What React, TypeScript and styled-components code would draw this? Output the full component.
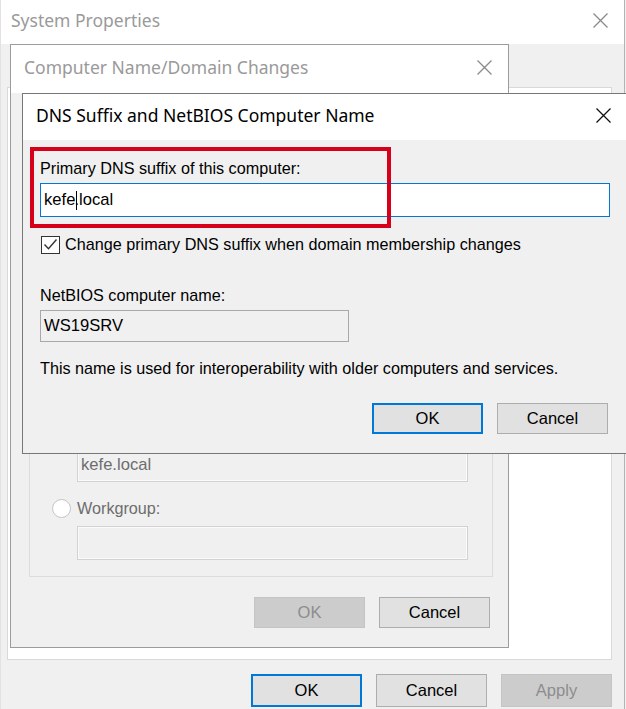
import React from 'react';
import styled, { createGlobalStyle } from 'styled-components';

const GlobalStyle = createGlobalStyle`
  html, body {
    margin: 0;
    padding: 0;
  }
  body {
    background: #f0f0f0;
    overflow: hidden;
    font-family: 'Liberation Sans', Arial, sans-serif;
    font-size: 16.2px;
    color: #000;
  }
`;

// the "desktop" the three windows sit on
const Desktop = styled.div`
  position: relative;
  width: 626px;
  height: 709px;
  overflow: hidden;
  background: #f0f0f0;
`;

const Window = styled.div<{ $x: number; $y: number; $w: number; $h: number; $border: string }>`
  position: absolute;
  left: ${(p) => p.$x}px;
  top: ${(p) => p.$y}px;
  width: ${(p) => p.$w}px;
  height: ${(p) => p.$h}px;
  box-sizing: border-box;
  border: 1px solid ${(p) => p.$border};
  background: #f0f0f0;
  display: flex;
  flex-direction: column;
  overflow: hidden;
`;

const MainWindow = styled(Window)`
  border-top: none;
  border-bottom: none;
  border-left-color: #e2e2e2;
`;

const TitleBar = styled.div<{ $h: number; $pl: number }>`
  flex: none;
  height: ${(p) => p.$h}px;
  box-sizing: border-box;
  background: #fff;
  display: flex;
  align-items: center;
  justify-content: space-between;
  padding: 0 16px 4px ${(p) => p.$pl}px;
`;

const Title = styled.span<{ $active?: boolean }>`
  font-family: 'Noto Sans', 'Open Sans', sans-serif;
  font-size: 17.5px;
  color: ${(p) => (p.$active ? '#000' : '#9a9a9a')};
  white-space: nowrap;
`;

const CloseIcon = ({ color }: { color: string }) => (
  <svg width="15" height="15" viewBox="0 0 15 15">
    <path d="M0.5 0.5 L14.5 14.5 M14.5 0.5 L0.5 14.5" stroke={color} strokeWidth="1.3" fill="none" />
  </svg>
);

/* ---------- System Properties ---------- */

const MainBody = styled.div`
  flex: 1;
  display: flex;
  flex-direction: column;
  padding: 43px 12px 0 6px;
`;

const TabPanel = styled.div`
  height: 573px;
  box-sizing: border-box;
  background: #fff;
  border: 1px solid #d9d9d9;
`;

const ButtonRow = styled.div<{ $mt: number; $gap?: number; $pr?: number }>`
  display: flex;
  justify-content: flex-end;
  gap: ${(p) => p.$gap ?? 14}px;
  margin-top: ${(p) => p.$mt}px;
  padding-right: ${(p) => p.$pr ?? 0}px;
`;

const Button = styled.button<{ $default?: boolean; $h: number; $w?: number }>`
  width: ${(p) => p.$w ?? 111}px;
  height: ${(p) => p.$h}px;
  box-sizing: border-box;
  margin: 0;
  padding: 0;
  background: #e1e1e1;
  border: ${(p) => (p.$default ? '2px solid #0078d7' : '1px solid #adadad')};
  font-family: 'Liberation Sans', Arial, sans-serif;
  font-size: 16.5px;
  color: #000;

  &:disabled {
    background: #cccccc;
    border: 1px solid #c4c4c4;
    color: #8d8d8d;
  }
`;

/* ---------- Computer Name/Domain Changes ---------- */

const ChangesBody = styled.div`
  flex: 1;
  display: flex;
  flex-direction: column;
  justify-content: flex-end;
  padding: 0 16px 19px 18px;
  overflow: hidden;
  color: #6d6d6d;
`;

const Group = styled.fieldset`
  margin: 0;
  padding: 0 24px 16px 22px;
  border: 1px solid #dcdcdc;
  display: flex;
  flex-direction: column;
`;

const Legend = styled.legend`
  padding: 0 3px;
`;

const RadioRow = styled.div<{ $mt: number }>`
  display: flex;
  align-items: center;
  gap: 6px;
  height: 19px;
  margin-top: ${(p) => p.$mt}px;
`;

const Radio = styled.span<{ $checked?: boolean }>`
  flex: none;
  width: 19px;
  height: 19px;
  box-sizing: border-box;
  border-radius: 50%;
  border: 1px solid #c4c4c4;
  background: #fff;
  display: flex;
  align-items: center;
  justify-content: center;

  &::after {
    content: '';
    display: ${(p) => (p.$checked ? 'block' : 'none')};
    width: 9px;
    height: 9px;
    border-radius: 50%;
    background: #9a9a9a;
  }
`;

const Field = styled.div<{ $w?: number; $h: number; $mt: number; $ml?: number; $variant: 'focus' | 'readonly' | 'disabled' }>`
  width: ${(p) => (p.$w ? `${p.$w}px` : 'auto')};
  height: ${(p) => p.$h}px;
  margin-top: ${(p) => p.$mt}px;
  margin-left: ${(p) => p.$ml ?? 0}px;
  box-sizing: border-box;
  display: flex;
  align-items: center;
  padding-left: 3px;
  font-size: 16.6px;
  white-space: nowrap;
  background: ${(p) => (p.$variant === 'focus' ? '#fff' : '#f0f0f0')};
  border: 1px solid
    ${(p) => (p.$variant === 'focus' ? '#0078d7' : p.$variant === 'readonly' ? '#a9a9a9' : '#d2d2d2')};
  box-shadow: ${(p) => (p.$variant === 'disabled' ? 'inset 0 0 0 1px #fbfbfb' : 'none')};
  color: ${(p) => (p.$variant === 'disabled' ? '#6d6d6d' : '#000')};
`;

/* ---------- DNS Suffix and NetBIOS Computer Name ---------- */

const DnsBody = styled.div`
  position: relative;
  flex: 1;
  display: flex;
  flex-direction: column;
  padding: 19px 17px 19px 17px;
`;

const Label = styled.div<{ $mt?: number }>`
  line-height: 19px;
  height: 19px;
  margin-top: ${(p) => p.$mt ?? 0}px;
  white-space: nowrap;
`;

const Caret = styled.span`
  display: inline-block;
  width: 1px;
  height: 19px;
  background: #000;
  vertical-align: middle;
  margin: 0 -3px 0 1px;
  position: relative;
  z-index: 1;
`;

const CheckRow = styled.label`
  display: flex;
  align-items: center;
  gap: 5px;
  height: 19px;
  margin-top: 18px;
  padding-left: 1px;
  white-space: nowrap;
`;

const CheckBox = styled.span`
  flex: none;
  width: 19px;
  height: 18px;
  box-sizing: border-box;
  border: 1px solid #333;
  background: #fff;
  display: flex;
  align-items: center;
  justify-content: center;
`;

// annotation drawn over the dialog
const Highlight = styled.div`
  position: absolute;
  left: 7px;
  top: 7px;
  width: 361px;
  height: 81px;
  box-sizing: border-box;
  border: 4px solid #d7001b;
  pointer-events: none;
`;

export default function App() {
  return (
    <>
      <GlobalStyle />
      <Desktop>
        <MainWindow $x={0} $y={0} $w={625} $h={709} $border="#b4b4b4">
          <TitleBar $h={44} $pl={10}>
            <Title>System Properties</Title>
            <CloseIcon color="#8a8a8a" />
          </TitleBar>
          <MainBody>
            <TabPanel />
            <ButtonRow $mt={14}>
              <Button $default $h={33}>OK</Button>
              <Button $h={33}>Cancel</Button>
              <Button $h={33} disabled>
                Apply
              </Button>
            </ButtonRow>
          </MainBody>
        </MainWindow>

        <Window $x={10} $y={44} $w={499} $h={604} $border="#9c9c9c">
          <TitleBar $h={48} $pl={13}>
            <Title>Computer Name/Domain Changes</Title>
            <CloseIcon color="#8a8a8a" />
          </TitleBar>
          <ChangesBody>
            <Group>
              <Legend>Member of</Legend>
              <RadioRow $mt={4}>
                <Radio $checked />
                <span>Domain:</span>
              </RadioRow>
              <Field $variant="disabled" $w={391} $h={34} $mt={7} $ml={25}>
                kefe.local
              </Field>
              <RadioRow $mt={17}>
                <Radio />
                <span>Workgroup:</span>
              </RadioRow>
              <Field $variant="disabled" $w={391} $h={34} $mt={8} $ml={25} />
            </Group>
            <ButtonRow $mt={20} $pr={2}>
              <Button $h={31} disabled>
                OK
              </Button>
              <Button $h={31}>Cancel</Button>
            </ButtonRow>
          </ChangesBody>
        </Window>

        <Window $x={22} $y={93} $w={606} $h={361} $border="#777">
          <TitleBar $h={46} $pl={13}>
            <Title $active>DNS Suffix and NetBIOS Computer Name</Title>
            <CloseIcon color="#111" />
          </TitleBar>
          <DnsBody>
            <Label>Primary DNS suffix of this computer:</Label>
            <Field $variant="focus" $h={34} $mt={5}>
              <span>
                kefe
                <Caret />
                .local
              </span>
            </Field>
            <CheckRow>
              <CheckBox>
                <svg width="15" height="13" viewBox="0 0 15 13">
                  <path d="M1.5 6.5 L5.5 10.8 L13.5 1.5" stroke="#333" strokeWidth="1.4" fill="none" />
                </svg>
              </CheckBox>
              <span>Change primary DNS suffix when domain membership changes</span>
            </CheckRow>
            <Label $mt={32}>NetBIOS computer name:</Label>
            <Field $variant="readonly" $w={309} $h={32} $mt={5}>
              WS19SRV
            </Field>
            <Label $mt={17}>This name is used for interoperability with older computers and services.</Label>
            <ButtonRow $mt={25} $pr={2}>
              <Button $default $h={31}>OK</Button>
              <Button $h={31}>Cancel</Button>
            </ButtonRow>
            <Highlight />
          </DnsBody>
        </Window>
      </Desktop>
    </>
  );
}
